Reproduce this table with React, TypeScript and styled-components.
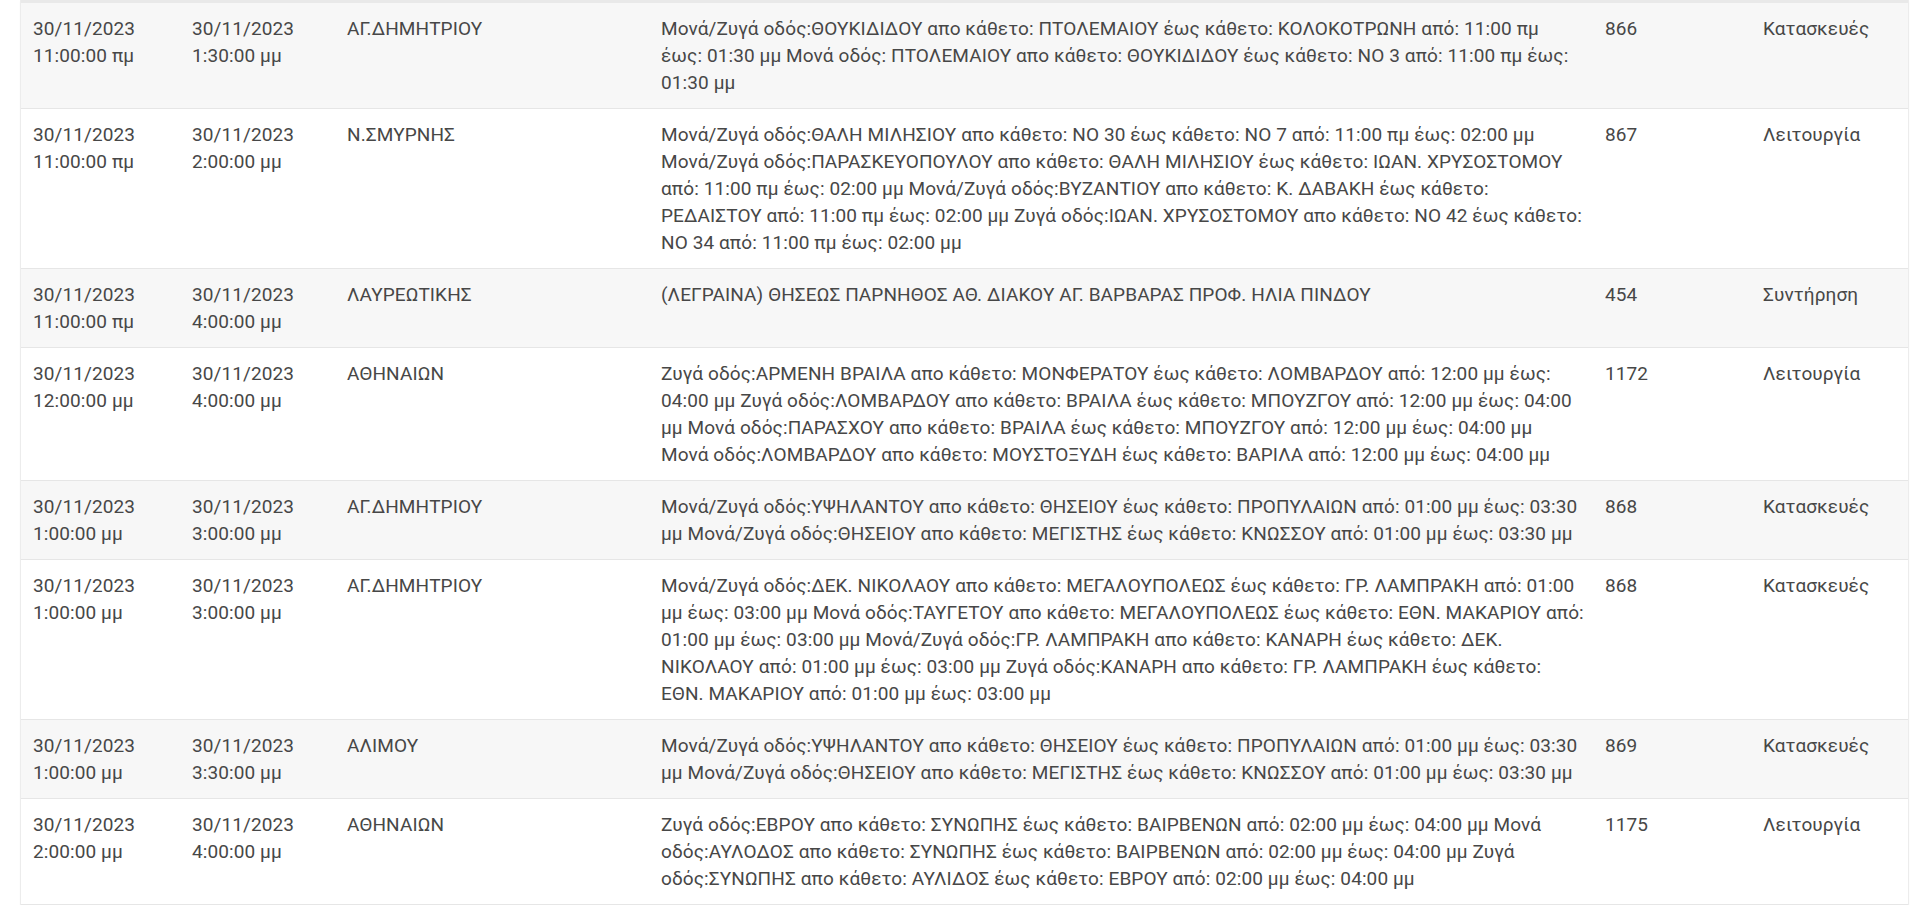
import React from "react";
import styled, { createGlobalStyle } from "styled-components";

const GlobalStyle = createGlobalStyle`
  html, body {
    margin: 0;
    padding: 0;
    background: #ffffff;
  }
  body {
    font-family: Roboto, "Noto Sans", Arial, sans-serif;
  }
`;

const Page = styled.div`
  padding: 0 12px 0 21px;
`;

const Card = styled.div`
  background: #ffffff;
  border-top: 3px solid #e9e9e9;
  box-shadow: 0 0 0 1px #ececec, 0 1px 3px rgba(0, 0, 0, 0.06);
`;

const Table = styled.table`
  width: 100%;
  border-collapse: collapse;
  table-layout: fixed;
`;

const Row = styled.tr<{ $striped: boolean }>`
  background: ${(p) => (p.$striped ? "#f7f7f7" : "#ffffff")};
  border-bottom: 1px solid #e6e6e6;
`;

const Cell = styled.td`
  padding: 12px;
  vertical-align: top;
  font-family: Roboto, "Noto Sans", Arial, sans-serif;
  font-size: 19px;
  line-height: 27px;
  letter-spacing: 0.1px;
  color: #474747;
`;

const Line = styled.span`
  display: block;
  white-space: nowrap;
`;

type Item = {
  from: [string, string];
  to: [string, string];
  area: string;
  desc: string[];
  code: string;
  kind: string;
};

const ypsilantou = [
  "Μονά/Ζυγά οδός:ΥΨΗΛΑΝΤΟΥ απο κάθετο: ΘΗΣΕΙΟΥ έως κάθετο: ΠΡΟΠΥΛΑΙΩΝ από: 01:00 μμ έως: 03:30",
  "μμ Μονά/Ζυγά οδός:ΘΗΣΕΙΟΥ απο κάθετο: ΜΕΓΙΣΤΗΣ έως κάθετο: ΚΝΩΣΣΟΥ από: 01:00 μμ έως: 03:30 μμ",
];

const items: Item[] = [
  {
    from: ["30/11/2023", "11:00:00 πμ"],
    to: ["30/11/2023", "1:30:00 μμ"],
    area: "ΑΓ.ΔΗΜΗΤΡΙΟΥ",
    desc: [
      "Μονά/Ζυγά οδός:ΘΟΥΚΙΔΙΔΟΥ απο κάθετο: ΠΤΟΛΕΜΑΙΟΥ έως κάθετο: ΚΟΛΟΚΟΤΡΩΝΗ από: 11:00 πμ",
      "έως: 01:30 μμ Μονά οδός: ΠΤΟΛΕΜΑΙΟΥ απο κάθετο: ΘΟΥΚΙΔΙΔΟΥ έως κάθετο: ΝΟ 3 από: 11:00 πμ έως:",
      "01:30 μμ",
    ],
    code: "866",
    kind: "Κατασκευές",
  },
  {
    from: ["30/11/2023", "11:00:00 πμ"],
    to: ["30/11/2023", "2:00:00 μμ"],
    area: "Ν.ΣΜΥΡΝΗΣ",
    desc: [
      "Μονά/Ζυγά οδός:ΘΑΛΗ ΜΙΛΗΣΙΟΥ απο κάθετο: ΝΟ 30 έως κάθετο: ΝΟ 7 από: 11:00 πμ έως: 02:00 μμ",
      "Μονά/Ζυγά οδός:ΠΑΡΑΣΚΕΥΟΠΟΥΛΟΥ απο κάθετο: ΘΑΛΗ ΜΙΛΗΣΙΟΥ έως κάθετο: ΙΩΑΝ. ΧΡΥΣΟΣΤΟΜΟΥ",
      "από: 11:00 πμ έως: 02:00 μμ Μονά/Ζυγά οδός:ΒΥΖΑΝΤΙΟΥ απο κάθετο: Κ. ΔΑΒΑΚΗ έως κάθετο:",
      "ΡΕΔΑΙΣΤΟΥ από: 11:00 πμ έως: 02:00 μμ Ζυγά οδός:ΙΩΑΝ. ΧΡΥΣΟΣΤΟΜΟΥ απο κάθετο: ΝΟ 42 έως κάθετο:",
      "ΝΟ 34 από: 11:00 πμ έως: 02:00 μμ",
    ],
    code: "867",
    kind: "Λειτουργία",
  },
  {
    from: ["30/11/2023", "11:00:00 πμ"],
    to: ["30/11/2023", "4:00:00 μμ"],
    area: "ΛΑΥΡΕΩΤΙΚΗΣ",
    desc: ["(ΛΕΓΡΑΙΝΑ) ΘΗΣΕΩΣ ΠΑΡΝΗΘΟΣ ΑΘ. ΔΙΑΚΟΥ ΑΓ. ΒΑΡΒΑΡΑΣ ΠΡΟΦ. ΗΛΙΑ ΠΙΝΔΟΥ"],
    code: "454",
    kind: "Συντήρηση",
  },
  {
    from: ["30/11/2023", "12:00:00 μμ"],
    to: ["30/11/2023", "4:00:00 μμ"],
    area: "ΑΘΗΝΑΙΩΝ",
    desc: [
      "Ζυγά οδός:ΑΡΜΕΝΗ ΒΡΑΙΛΑ απο κάθετο: ΜΟΝΦΕΡΑΤΟΥ έως κάθετο: ΛΟΜΒΑΡΔΟΥ από: 12:00 μμ έως:",
      "04:00 μμ Ζυγά οδός:ΛΟΜΒΑΡΔΟΥ απο κάθετο: ΒΡΑΙΛΑ έως κάθετο: ΜΠΟΥΖΓΟΥ από: 12:00 μμ έως: 04:00",
      "μμ Μονά οδός:ΠΑΡΑΣΧΟΥ απο κάθετο: ΒΡΑΙΛΑ έως κάθετο: ΜΠΟΥΖΓΟΥ από: 12:00 μμ έως: 04:00 μμ",
      "Μονά οδός:ΛΟΜΒΑΡΔΟΥ απο κάθετο: ΜΟΥΣΤΟΞΥΔΗ έως κάθετο: ΒΑΡΙΛΑ από: 12:00 μμ έως: 04:00 μμ",
    ],
    code: "1172",
    kind: "Λειτουργία",
  },
  {
    from: ["30/11/2023", "1:00:00 μμ"],
    to: ["30/11/2023", "3:00:00 μμ"],
    area: "ΑΓ.ΔΗΜΗΤΡΙΟΥ",
    desc: ypsilantou,
    code: "868",
    kind: "Κατασκευές",
  },
  {
    from: ["30/11/2023", "1:00:00 μμ"],
    to: ["30/11/2023", "3:00:00 μμ"],
    area: "ΑΓ.ΔΗΜΗΤΡΙΟΥ",
    desc: [
      "Μονά/Ζυγά οδός:ΔΕΚ. ΝΙΚΟΛΑΟΥ απο κάθετο: ΜΕΓΑΛΟΥΠΟΛΕΩΣ έως κάθετο: ΓΡ. ΛΑΜΠΡΑΚΗ από: 01:00",
      "μμ έως: 03:00 μμ Μονά οδός:ΤΑΥΓΕΤΟΥ απο κάθετο: ΜΕΓΑΛΟΥΠΟΛΕΩΣ έως κάθετο: ΕΘΝ. ΜΑΚΑΡΙΟΥ από:",
      "01:00 μμ έως: 03:00 μμ Μονά/Ζυγά οδός:ΓΡ. ΛΑΜΠΡΑΚΗ απο κάθετο: ΚΑΝΑΡΗ έως κάθετο: ΔΕΚ.",
      "ΝΙΚΟΛΑΟΥ από: 01:00 μμ έως: 03:00 μμ Ζυγά οδός:ΚΑΝΑΡΗ απο κάθετο: ΓΡ. ΛΑΜΠΡΑΚΗ έως κάθετο:",
      "ΕΘΝ. ΜΑΚΑΡΙΟΥ από: 01:00 μμ έως: 03:00 μμ",
    ],
    code: "868",
    kind: "Κατασκευές",
  },
  {
    from: ["30/11/2023", "1:00:00 μμ"],
    to: ["30/11/2023", "3:30:00 μμ"],
    area: "ΑΛΙΜΟΥ",
    desc: ypsilantou,
    code: "869",
    kind: "Κατασκευές",
  },
  {
    from: ["30/11/2023", "2:00:00 μμ"],
    to: ["30/11/2023", "4:00:00 μμ"],
    area: "ΑΘΗΝΑΙΩΝ",
    desc: [
      "Ζυγά οδός:ΕΒΡΟΥ απο κάθετο: ΣΥΝΩΠΗΣ έως κάθετο: ΒΑΙΡΒΕΝΩΝ από: 02:00 μμ έως: 04:00 μμ Μονά",
      "οδός:ΑΥΛΟΔΟΣ απο κάθετο: ΣΥΝΩΠΗΣ έως κάθετο: ΒΑΙΡΒΕΝΩΝ από: 02:00 μμ έως: 04:00 μμ Ζυγά",
      "οδός:ΣΥΝΩΠΗΣ απο κάθετο: ΑΥΛΙΔΟΣ έως κάθετο: ΕΒΡΟΥ από: 02:00 μμ έως: 04:00 μμ",
    ],
    code: "1175",
    kind: "Λειτουργία",
  },
];

const widths = [159, 155, 314, 944, 158, 157];

export default function App() {
  return (
    <>
      <GlobalStyle />
      <Page>
        <Card>
          <Table>
            <colgroup>
              {widths.map((w, i) => (
                <col key={i} style={{ width: w }} />
              ))}
            </colgroup>
            <tbody>
              {items.map((it, i) => (
                <Row key={i} $striped={i % 2 === 0}>
                  <Cell>
                    <Line>{it.from[0]}</Line>
                    <Line>{it.from[1]}</Line>
                  </Cell>
                  <Cell>
                    <Line>{it.to[0]}</Line>
                    <Line>{it.to[1]}</Line>
                  </Cell>
                  <Cell>{it.area}</Cell>
                  <Cell>
                    {it.desc.map((l, j) => (
                      <Line key={j}>{l}</Line>
                    ))}
                  </Cell>
                  <Cell>{it.code}</Cell>
                  <Cell>{it.kind}</Cell>
                </Row>
              ))}
            </tbody>
          </Table>
        </Card>
      </Page>
    </>
  );
}
